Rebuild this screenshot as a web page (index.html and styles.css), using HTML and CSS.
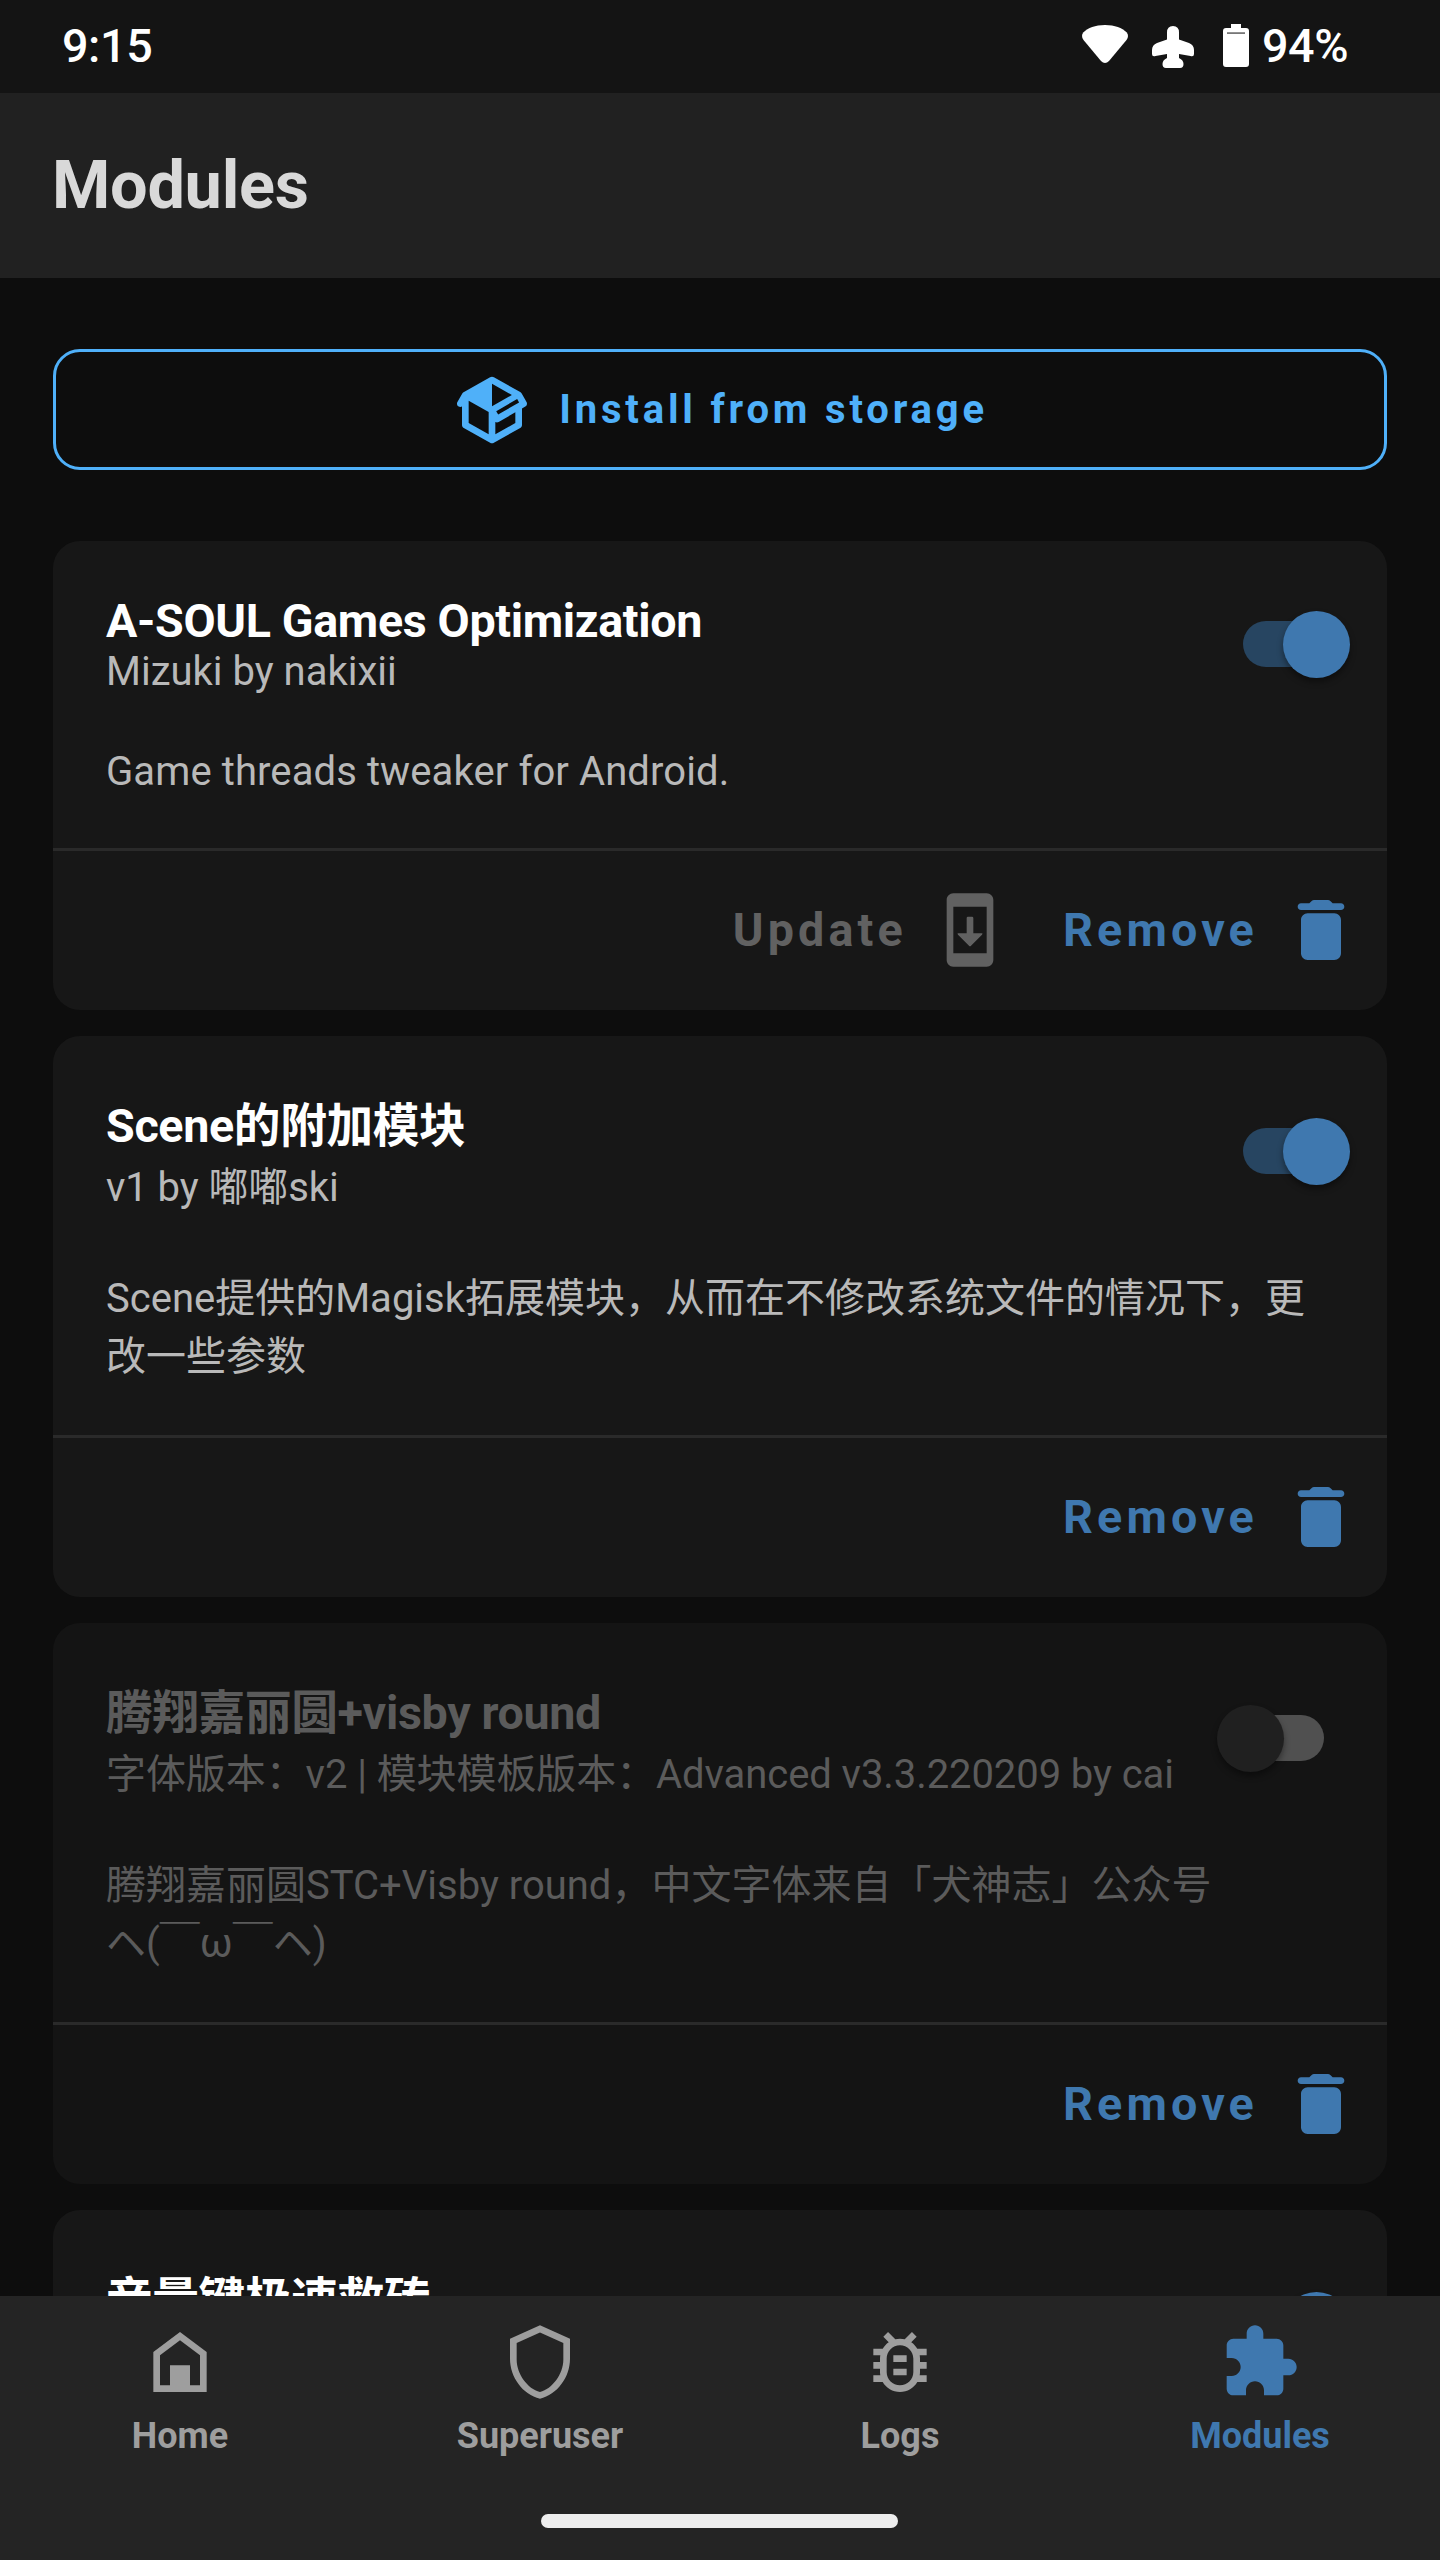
FILE: index.html
```html
<!DOCTYPE html>
<html lang="zh-CN">
<head>
<meta charset="utf-8">
<title>Modules</title>
<link rel="stylesheet" href="styles.css">
</head>
<body>
<svg class="defs" width="0" height="0" aria-hidden="true">
  <symbol id="trash" viewBox="0 0 24 24"><path d="M6 19c0 1.100.9 2 2 2h8c1.100 0 2-.9 2-2V9c0-1.100-.9-2-2-2H8c-1.100 0-2 .9-2 2zM18 4h-2.500l-.71-.71c-.18-.18-.44-.29-.7-.29H9.910c-.26 0-.52.11-.7.29L8.500 4H6c-.55 0-1 .45-1 1s.45 1 1 1h12c.55 0 1-.45 1-1s-.45-1-1-1z"/></symbol>
</svg>
<div class="screen">
  <div class="statusbar">
    <span class="clock">9:15</span>
    <div class="indicators">
      <svg class="wifi" viewBox="0 0 46 38"><path d="M23 0C33 0 40 3 44.500 7.200C46.500 9.500 46.400 12.500 44.500 15L27 36Q23 40 19 36L1.500 15C-.4 12.500-.5 9.500 1.500 7.200C6 3 13 0 23 0Z"/></svg>
      <svg class="plane" viewBox="0 0 42 42"><path d="M21 0Q27 0 27 6.500V13.500L37 17Q42 19 42 24V28Q42 31 38.500 30L27 28V32Q31.500 34 31.500 38Q31.500 42 28 42H14Q10.500 42 10.500 38Q10.500 34 15 32V28L3.500 30Q0 31 0 28V24Q0 19 5 17L15 13.500V6.500Q15 0 21 0Z"/></svg>
      <svg class="battery" viewBox="0 0 26 43"><path d="M8 0H18V4H23Q26 4 26 7V40Q26 43 23 43H3Q0 43 0 40V7Q0 4 3 4H8Z"/><path class="slit" d="M4 8.200H22V10H4Z"/></svg>
      <span class="percent">94%</span>
    </div>
  </div>
  <header class="appbar"><h1>Modules</h1></header>
  <main class="content">
    <button class="install">
      <svg class="icon" viewBox="0 0 24 24"><path fill-rule="evenodd" d="M2,10.960C1.500,10.680 1.350,10.070 1.630,9.590L3.130,7C3.240,6.800 3.410,6.660 3.600,6.580L11.430,2.180C11.590,2.060 11.790,2 12,2C12.210,2 12.410,2.060 12.570,2.180L20.470,6.620C20.660,6.720 20.820,6.880 20.910,7.080L22.360,9.600C22.640,10.080 22.470,10.690 22,10.960L21,11.540V16.500C21,16.880 20.790,17.210 20.470,17.380L12.570,21.820C12.410,21.940 12.210,22 12,22C11.790,22 11.590,21.940 11.430,21.820L3.530,17.380C3.210,17.210 3,16.880 3,16.500V10.960C2.700,11.130 2.320,11.140 2,10.960M12,4.150V10.850L17.960,7.500L12,4.150M5,15.910L11,19.290V12.580L5,9.210V15.910M19,15.910V12.690L14,15.590C13.670,15.770 13.300,15.760 13,15.600V19.290L19,15.910M13.850,13.360L20.130,9.730L19.550,8.720L13.270,12.350L13.850,13.360Z"/></svg>
      <span>Install from storage</span>
    </button>

    <article class="card">
      <div class="body">
        <div class="info">
          <h2>A-SOUL Games Optimization</h2>
          <p class="meta">Mizuki by nakixii</p>
          <p class="desc">Game threads tweaker for Android.</p>
        </div>
        <span class="switch on"><i></i></span>
      </div>
      <div class="actions">
        <span class="action disabled">Update <svg class="icon" viewBox="0 0 24 24"><path d="M17 1H7C5.900 1 5 1.900 5 3v18c0 1.100.9 2 2 2h10c1.100 0 2-.9 2-2V3c0-1.100-.9-2-2-2zM17 19H7V5h10zM15.500 13H13V8.400Q13 8 12.600 8H11.400Q11 8 11 8.400V13H8.500Q8 13 8.400 13.400L11.700 16.700Q12 17 12.300 16.700L15.600 13.400Q16 13 15.500 13z"/></svg></span>
        <span class="action">Remove <svg class="icon"><use href="#trash"/></svg></span>
      </div>
    </article>

    <article class="card tall">
      <div class="body">
        <div class="info">
          <h2>Scene的附加模块</h2>
          <p class="meta">v1 by 嘟嘟ski</p>
          <p class="desc">Scene提供的Magisk拓展模块，从而在不修改系统文件的情况下，更<br>改一些参数</p>
        </div>
        <span class="switch on"><i></i></span>
      </div>
      <div class="actions">
        <span class="action">Remove <svg class="icon"><use href="#trash"/></svg></span>
      </div>
    </article>

    <article class="card tall off">
      <div class="body">
        <div class="info">
          <h2>腾翔嘉丽圆+visby round</h2>
          <p class="meta">字体版本：v2 | 模块模板版本：Advanced v3.3.220209 by cai</p>
          <p class="desc">腾翔嘉丽圆STC+Visby round，中文字体来自「犬神志」公众号<br>ヘ(￣ω￣ヘ)</p>
        </div>
        <span class="switch"><i></i></span>
      </div>
      <div class="actions">
        <span class="action">Remove <svg class="icon"><use href="#trash"/></svg></span>
      </div>
    </article>

    <article class="card tall">
      <div class="body">
        <div class="info"><h2>音量键极速救砖</h2></div>
        <span class="switch on"><i></i></span>
      </div>
    </article>
  </main>
  <nav class="bottomnav">
    <div class="tabs">
      <a class="tab"><svg class="icon" viewBox="0 0 24 24"><path fill-rule="evenodd" d="M12 3L20 9V21H4V9ZM12 5.500L6 10V19H9V13H15V19H18V10Z"/></svg><span>Home</span></a>
      <a class="tab"><svg class="icon" viewBox="0 0 24 24"><path fill-rule="evenodd" d="M21,11C21,16.550 17.160,21.740 12,23C6.840,21.740 3,16.550 3,11V5L12,1L21,5V11M12,21C15.750,20 19,15.540 19,11.220V6.300L12,3.180L5,6.300V11.220C5,15.540 8.250,20 12,21Z"/></svg><span>Superuser</span></a>
      <a class="tab"><svg class="icon" viewBox="0 0 24 24"><path fill-rule="evenodd" d="M20 8h-2.810c-.45-.78-1.070-1.450-1.820-1.960L17 4.410 15.590 3l-2.170 2.170C12.960 5.060 12.490 5 12 5s-.96.06-1.410.17L8.410 3 7 4.410l1.620 1.630C7.880 6.550 7.260 7.220 6.810 8H4v2h2.090C6.040 10.330 6 10.660 6 11v1H4v2h2v1c0 .34.04.67.09 1H4v2h2.810c1.040 1.790 2.970 3 5.190 3s4.150-1.210 5.190-3H20v-2h-2.090c.05-.33.09-.66.09-1v-1h2v-2h-2v-1c0-.34-.04-.67-.09-1H20V8zM16 15c0 2.210-1.790 4-4 4s-4-1.790-4-4v-4c0-2.210 1.790-4 4-4s4 1.790 4 4v4zM10 14h4v2h-4zM10 10h4v2h-4z"/></svg><span>Logs</span></a>
      <a class="tab active"><svg class="icon" viewBox="0 0 24 24"><path d="M20.500 11H19V7c0-1.100-.9-2-2-2h-4V3.500C13 2.120 11.880 1 10.500 1S8 2.120 8 3.500V5H4c-1.100 0-1.990.9-1.990 2v3.800H3.500c1.490 0 2.700 1.210 2.700 2.700s-1.210 2.700-2.700 2.700H2V20c0 1.100.9 2 2 2h3.800v-1.500c0-1.490 1.210-2.700 2.700-2.700s2.700 1.210 2.700 2.700V22H17c1.100 0 2-.9 2-2v-4h1.500c1.380 0 2.500-1.120 2.500-2.500S21.880 11 20.500 11z"/></svg><span>Modules</span></a>
    </div>
    <div class="handle"></div>
  </nav>
</div>
</body>
</html>
```
FILE: styles.css
```css
* { box-sizing: border-box; }
body {
  margin: 0;
  background: #0d0d0d;
  font-family: Roboto, "Noto Sans CJK SC", sans-serif;
}
h1, h2, p { margin: 0; }
svg { display: block; fill: currentColor; }
.defs { position: absolute; }
.icon { width: 80px; height: 80px; flex: none; }

.screen {
  width: 1440px;
  height: 2560px;
  overflow: hidden;
  display: flex;
  flex-direction: column;
}

.statusbar {
  height: 93px;
  flex: none;
  padding: 0 93px 0 62px;
  display: flex;
  justify-content: space-between;
  background: #141414;
  color: #fff;
  font-size: 46.67px;
  font-weight: 500;
  letter-spacing: -.4px;
  line-height: 92px;
}
.indicators { display: flex; }
.wifi { width: 46px; height: 38px; margin-top: 25px; }
.plane { width: 42px; height: 42px; margin: 26px 0 0 24px; }
.battery { width: 26px; height: 43px; margin: 24px 0 0 29px; }
.battery .slit { fill: #777; }
.percent { width: 85px; margin-left: 13px; white-space: nowrap; }

.appbar {
  height: 185px;
  flex: none;
  padding-left: 52px;
  background: #212121;
  color: #d9d9d9;
}
.appbar h1 { font-size: 66.67px; font-weight: 700; letter-spacing: -.3px; line-height: 184px; }

.content {
  flex: 1;
  min-height: 0;
  overflow: hidden;
  padding: 71px 53px 0;
}
.install {
  width: 1334px;
  height: 121px;
  margin-bottom: 71px;
  padding: 0;
  display: flex;
  align-items: center;
  justify-content: center;
  gap: 27px;
  border: 3px solid #4fb0f9;
  border-radius: 27px;
  background: none;
  color: #4fb0f9;
  font: 700 40px/48px Roboto, sans-serif;
  letter-spacing: 3.82px;
}

.card {
  height: 469px;
  margin-bottom: 26px;
  border-radius: 27px;
  background: #171717;
}
.card.tall { height: 561px; }
.body {
  height: 310px;
  padding: 53px 37px 0 53px;
  display: flex;
  justify-content: space-between;
  border-bottom: 3px solid #2a2a2a;
}
.tall .body { height: 402px; }
.info {
  flex: 1;
  min-width: 0;
  color: #b9b9b9;
  font-size: 40px;
  white-space: nowrap;
}
.info h2 {
  color: #fff;
  font-size: 46.67px;
  font-weight: 700;
  letter-spacing: -.35px;
  line-height: 55px;
}
.meta { line-height: 46px; }
.desc { margin-top: 53px; letter-spacing: .1px; line-height: 47px; }
.tall .info h2 { line-height: 74px; }
.tall .meta { letter-spacing: -.08px; line-height: 49px; }
.tall .desc { margin-top: 58px; letter-spacing: 0; line-height: 58px; }

.switch {
  flex: none;
  width: 107px;
  height: 67px;
  margin-top: 17px;
  padding: 10px 0 11px 27px;
  position: relative;
}
.switch.on { padding: 10px 27px 11px 0; }
.tall .switch { margin-top: 29px; }
.off .switch { margin-right: 26px; }
.switch::before {
  content: "";
  display: block;
  height: 46px;
  border-radius: 23px;
  background: #505050;
}
.on::before { background: #274561; }
.switch i {
  position: absolute;
  top: 0;
  left: 0;
  width: 67px;
  height: 67px;
  border-radius: 50%;
  background: #202020;
  box-shadow: 0 4px 6px rgba(0, 0, 0, .4);
}
.on i { left: auto; right: 0; background: #3f78af; }

.actions {
  height: 158px;
  padding-right: 26px;
  display: flex;
  align-items: center;
  justify-content: flex-end;
  gap: 53px;
}
.action {
  display: flex;
  align-items: center;
  gap: 23px;
  color: #3f78af;
  font-size: 46.67px;
  font-weight: 700;
  letter-spacing: 4.17px;
}
.action.disabled { color: #616161; }
.off { background: #141414; }
.off .info, .off .info h2 { color: #5b5b5b; }

.bottomnav {
  height: 264px;
  flex: none;
  background: #242424;
  color: #9e9e9e;
}
.tabs { display: flex; height: 218px; }
.tab {
  width: 360px;
  padding-top: 26px;
  display: flex;
  flex-direction: column;
  align-items: center;
  font-size: 36px;
  font-weight: 700;
  line-height: 44px;
}
.tab span { margin-top: 12px; }
.tab.active { color: #3f78af; }
.handle {
  width: 357px;
  height: 14px;
  margin-left: 541px;
  border-radius: 7px;
  background: #eee;
}
```
